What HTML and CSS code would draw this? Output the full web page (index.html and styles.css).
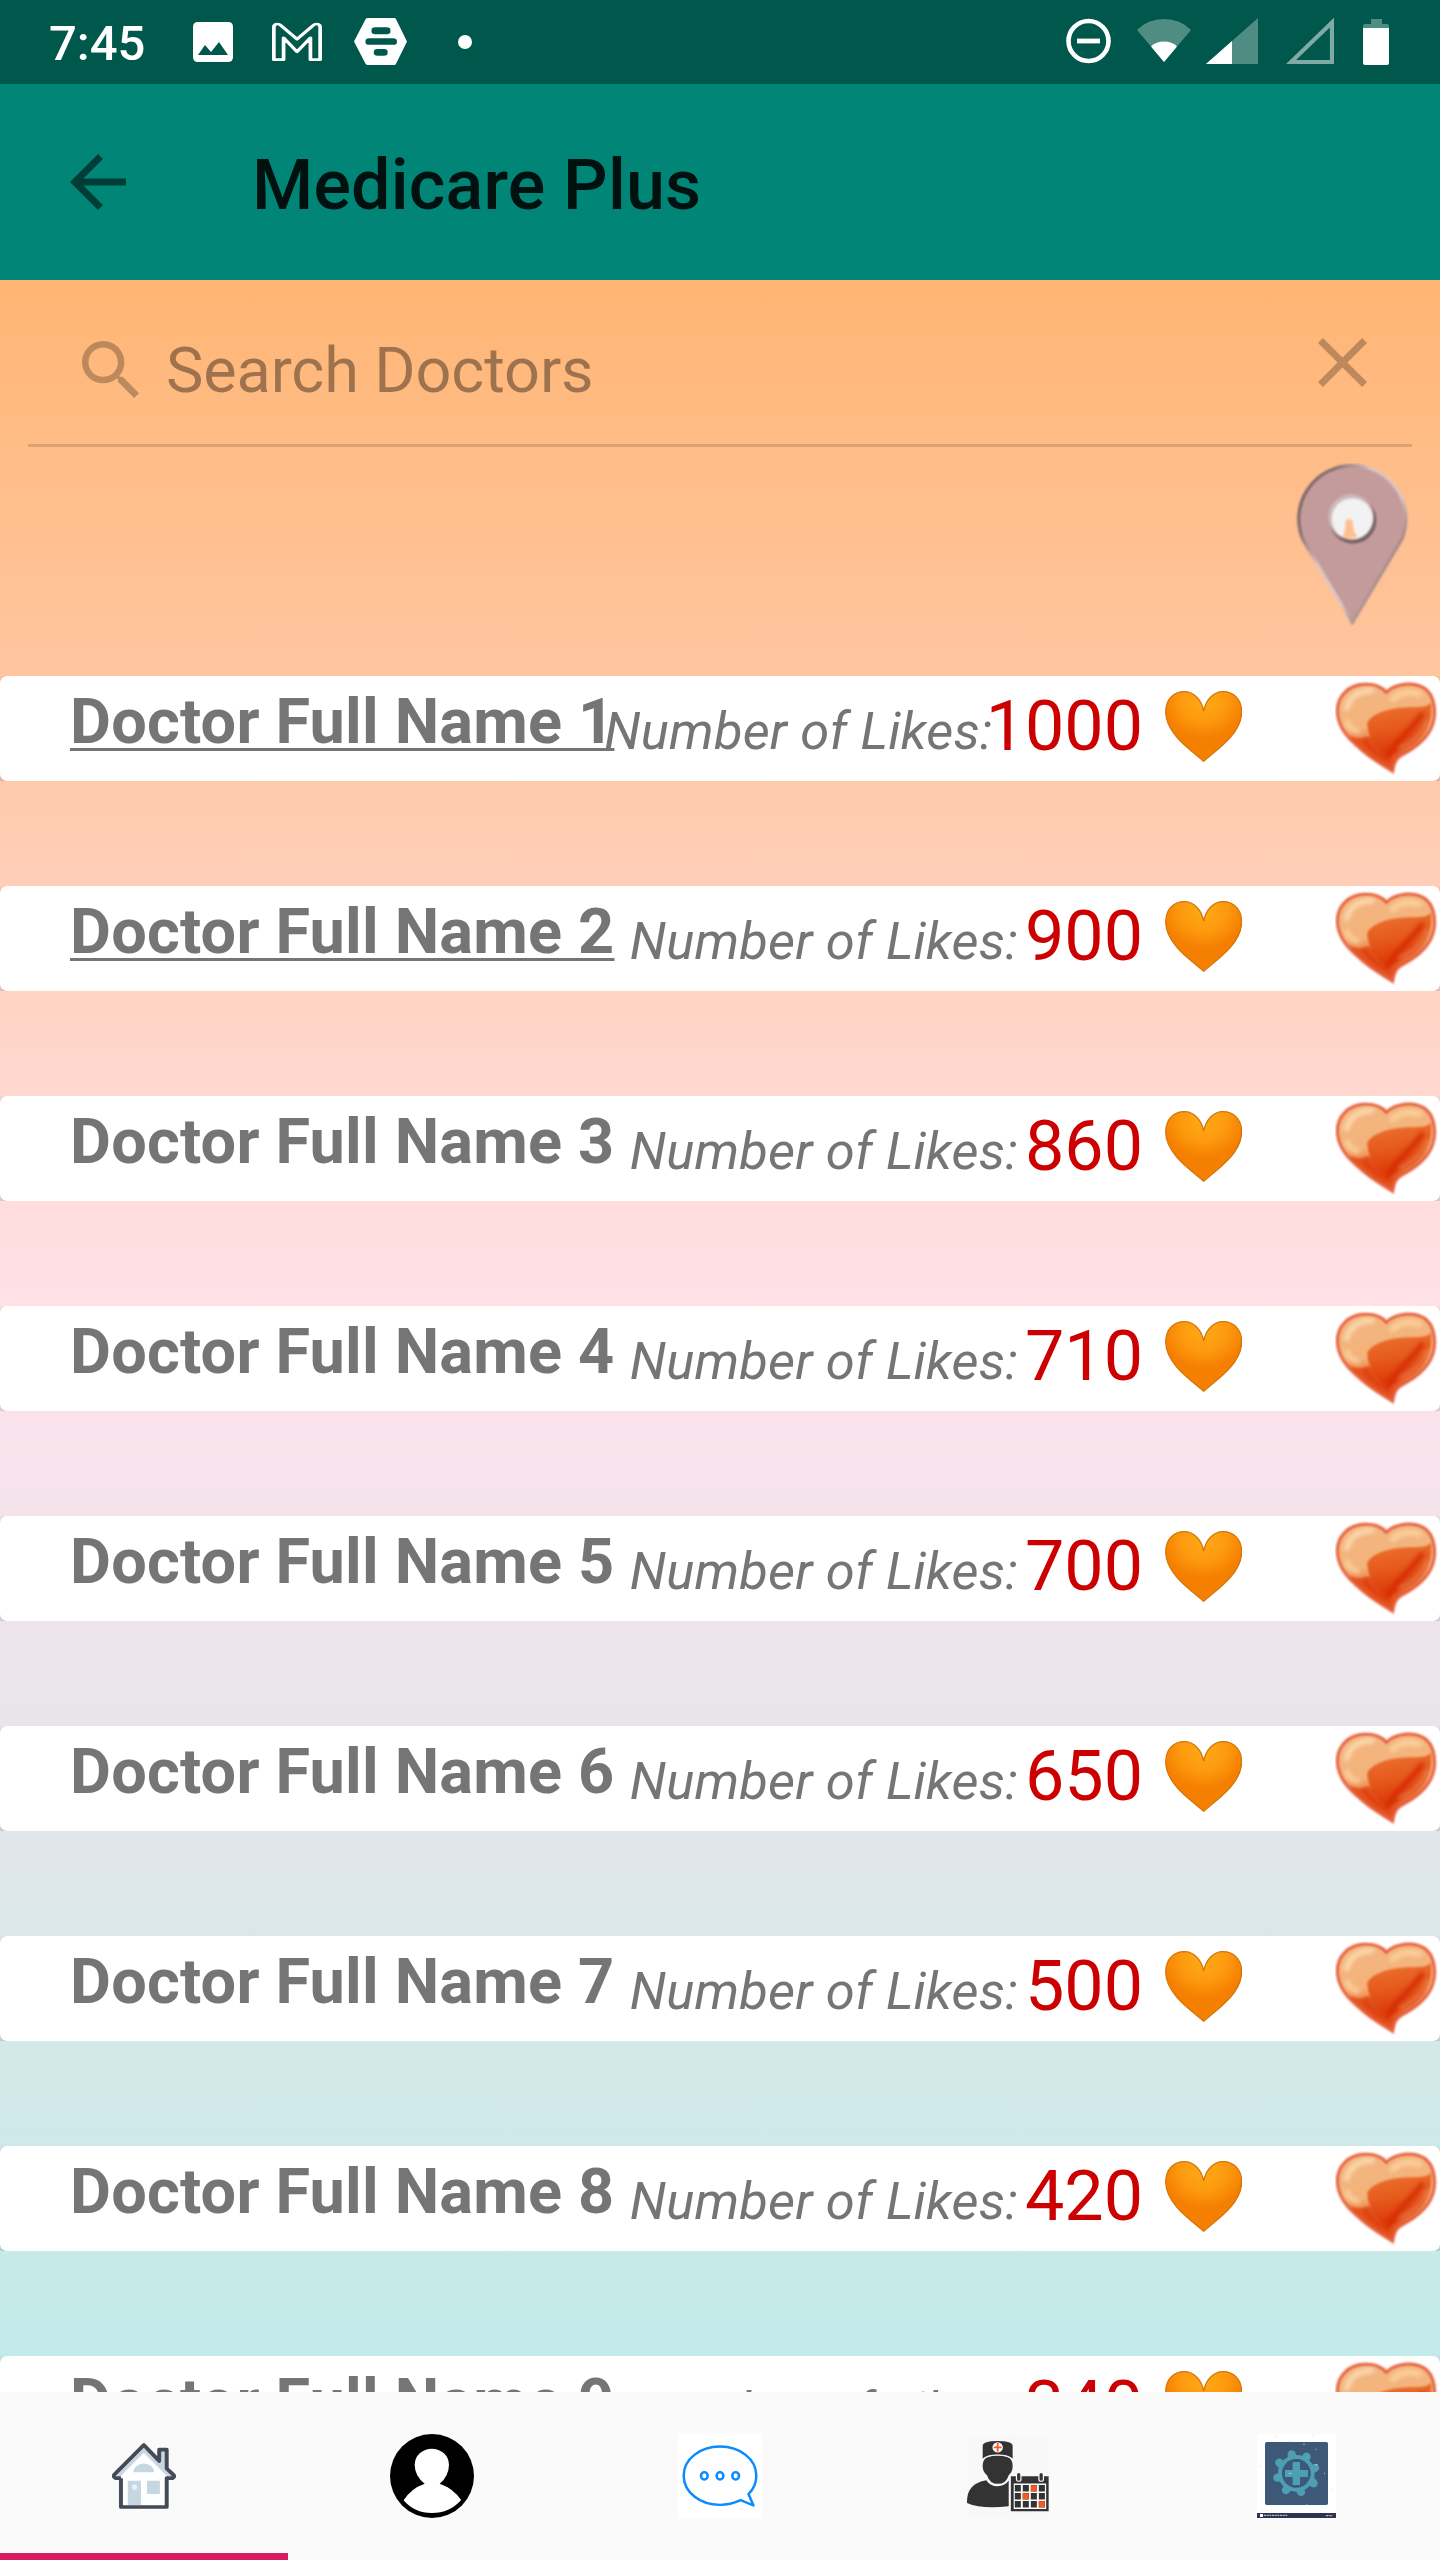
FILE: index.html
```html
<!DOCTYPE html>
<html lang="en">
<head>
<meta charset="utf-8">
<title>Medicare Plus</title>
<link rel="stylesheet" href="styles.css">
</head>
<body>
<svg class="sprite" aria-hidden="true">
  <defs>
    <radialGradient id="amber" cx=".5" cy=".12" r=".55">
      <stop offset="0" stop-color="#ffa916"/><stop offset=".55" stop-color="#fd9a0e"/><stop offset="1" stop-color="#f57f00"/>
    </radialGradient>
    <linearGradient id="peach" x1="0" y1="0" x2="0" y2="1">
      <stop offset="0" stop-color="#f4b581"/><stop offset=".5" stop-color="#f3b37a"/><stop offset=".7" stop-color="#ea7238"/><stop offset="1" stop-color="#e24d1a"/>
    </linearGradient>
    <linearGradient id="ember" x1="0" y1="0" x2=".2" y2="1">
      <stop offset="0" stop-color="#ec7532"/><stop offset=".5" stop-color="#e65a1d"/><stop offset="1" stop-color="#dc3304"/>
    </linearGradient>
    <linearGradient id="bevel" x1="0" y1="0" x2="1" y2=".8">
      <stop offset="0" stop-color="#6d5659"/><stop offset=".22" stop-color="#806a6d"/><stop offset=".42" stop-color="#dac6c6"/><stop offset=".68" stop-color="#dac6c6"/><stop offset=".85" stop-color="#947a7c"/>
    </linearGradient>
    <filter id="soft" x="-10%" y="-10%" width="120%" height="120%" color-interpolation-filters="sRGB"><feGaussianBlur stdDeviation="3"/></filter>
    <filter id="softer" x="-30%" y="-30%" width="160%" height="160%" color-interpolation-filters="sRGB"><feGaussianBlur stdDeviation="6"/></filter>
    <symbol id="like" viewBox="135 93 231 211" preserveAspectRatio="none">
      <path d="M251 302C212 268 137 220 137 155C137 118 160 95 193 95C222 95 245 120 251 153C257 120 280 95 309 95C342 95 365 118 365 155C365 220 290 268 251 302Z" fill="url(#amber)" stroke="#d07405" stroke-width="3.5"/>
    </symbol>
    <symbol id="gloss" viewBox="645 48 315 315">
      <g filter="url(#soft)">
        <path d="M818 334C795 318 752 298 712 258C668 222 653 190 652 154C651 108 686 74 734 73C766 72 788 83 799 97C818 76 858 68 888 74C924 82 943 112 944 156C944 208 912 248 858 278C830 292 822 304 818 334Z" fill="url(#peach)" stroke="#e6603e" stroke-width="9"/>
        <path d="M690 226C710 240 730 234 745 228C770 252 800 270 860 262C830 286 818 300 814 324C790 310 748 290 700 242Z" fill="#e4551f"/>
        <path d="M742 188C760 158 810 144 865 142C895 140 918 144 932 128C940 180 920 230 868 258C835 272 815 280 804 298C785 280 742 244 742 188Z" fill="url(#ember)"/>
      </g>
      <g filter="url(#softer)" fill="none" stroke-linecap="round">
        <path d="M924 182C908 224 878 246 840 264" stroke="#f09a6b" stroke-width="9" opacity=".75"/>
        <path d="M905 165C875 208 835 235 808 280" stroke="#d52b03" stroke-width="17" opacity=".9"/>
        <path d="M735 245C760 275 785 290 806 300" stroke="#dc3c0c" stroke-width="14"/>
        <path d="M680 145C690 108 718 92 755 92" stroke="#fad7ab" stroke-width="18"/>
        <path d="M682 185C686 202 698 212 712 212" stroke="#f9cd9c" stroke-width="16"/>
        <path d="M818 118C838 98 868 92 898 102" stroke="#fbd09a" stroke-width="18"/>
      </g>
    </symbol>
  </defs>
</svg>

<div class="screen">
  <header class="status">
    <span class="time">7:45</span>
    <svg class="st-image" viewBox="0 0 40 40"><path fill="#fff" fill-rule="evenodd" d="M5 0H35Q40 0 40 5V35Q40 40 35 40H5Q0 40 0 35V5Q0 0 5 0ZM5 33H35L26 20L18 30L12 23Z"/></svg>
    <svg class="st-mail" viewBox="593 64 108 118" preserveAspectRatio="none"><path fill="none" stroke="#fff" stroke-width="8" stroke-linejoin="round" d="M597 178V80Q597 70 605 70Q609 70 612 74L647 116L682 74Q685 70 689 70Q697 70 697 80V178H676V112L647 154L618 112V178Z"/></svg>
    <svg class="st-hex" viewBox="771 55 115 142" preserveAspectRatio="none"><path fill="#fff" d="M801 55H858Q861 55 862 58L886 126L862 194Q861 197 858 197H801Q798 197 796 193L771 126L796 59Q798 55 801 55Z"/><g fill="#00574b"><rect x="809" y="83" width="41" height="21" rx="8"/><rect x="796" y="116" width="68" height="20" rx="8"/><rect x="814" y="149" width="30" height="20" rx="8"/></g></svg>
    <i class="st-dot"></i>
    <svg class="st-dnd" viewBox="0 0 45 46"><circle cx="22.5" cy="23" r="20" fill="none" stroke="#fff" stroke-width="4.6"/><path d="M11 23H34" stroke="#fff" stroke-width="4.8"/></svg>
    <svg class="st-wifi" viewBox="0 0 54 43"><path d="M27 43L0 11Q11 0 27 0Q43 0 54 11Z" fill="#4f8c82"/><path d="M27 43L14 27.500Q19 22.500 27 22.500Q35 22.500 40 27.500Z" fill="#fff"/></svg>
    <svg class="st-cell" viewBox="0 0 52 46"><path d="M52 0V46H0Z" fill="#4f8c82"/><path d="M26 23V46H0Z" fill="#fff"/></svg>
    <svg class="st-empty" viewBox="0 0 48 46"><path d="M46 4.500V44H5Z" fill="none" stroke="#80aba5" stroke-width="4.2"/></svg>
    <svg class="st-battery" viewBox="0 0 26 46"><path d="M8 0H19V5H24Q26 5 26 7V11H0V7Q0 5 2 5H8Z" fill="#4f8c82"/><path d="M0 9H26V44Q26 46 24 46H2Q0 46 0 44Z" fill="#fff"/></svg>
  </header>

  <div class="appbar">
    <svg class="back" viewBox="0 0 24 24"><path d="M20 11H7.830l5.590-5.590L12 4l-8 8 8 8 1.410-1.410L7.830 13H20v-2z"/></svg>
    <h1>Medicare Plus</h1>
  </div>

  <main>
    <div class="search">
      <svg class="lens" viewBox="3 3 17.490 17.490"><path d="M15.500 14h-.790l-.280-.270A6.471 6.471 0 0 0 16 9.500 6.500 6.500 0 1 0 9.500 16c1.610 0 3.090-.590 4.230-1.570l.270.280v.790l5 4.990L20.490 19l-4.990-5zm-6 0C7.010 14 5 11.990 5 9.500S7.010 5 9.500 5 14 7.010 14 9.500 11.990 14 9.500 14z"/></svg>
      <span class="hint">Search Doctors</span>
      <svg class="clear" viewBox="5 5 14 14"><path d="M19 6.410L17.590 5 12 10.590 6.410 5 5 6.410 10.590 12 5 17.590 6.410 19 12 13.410 17.590 19 19 17.590 13.410 12z"/></svg>
    </div>

    <div class="locate">
      <svg class="pin" viewBox="1005 518 345 490">
        <g filter="url(#soft)">
          <path d="M1180 998L1032 750A161 161 0 1 1 1329 747Z" fill="#c39b9a" stroke="url(#bevel)" stroke-width="9"/>
          <circle cx="1182" cy="690" r="70" fill="#765f62"/>
          <circle cx="1176" cy="680" r="68" fill="#cdbbbb"/>
          <circle cx="1180" cy="686" r="62" fill="#f2f2f2"/>
          <path d="M1150 742Q1160 725 1159 697Q1170 672 1182 697Q1181 725 1196 740Q1174 749 1150 742Z" fill="#ffc08f"/>
        </g>
      </svg>
    </div>

    <ul class="doctors">
      <li><div class="card first"><a class="name link">Doctor Full Name 1</a><em>Number of Likes:</em><b>1000</b><svg class="like"><use href="#like"/></svg><svg class="gloss"><use href="#gloss"/></svg></div></li>
      <li><div class="card"><a class="name link">Doctor Full Name 2</a><em>Number of Likes:</em><b>900</b><svg class="like"><use href="#like"/></svg><svg class="gloss"><use href="#gloss"/></svg></div></li>
      <li><div class="card"><span class="name">Doctor Full Name 3</span><em>Number of Likes:</em><b>860</b><svg class="like"><use href="#like"/></svg><svg class="gloss"><use href="#gloss"/></svg></div></li>
      <li><div class="card"><span class="name">Doctor Full Name 4</span><em>Number of Likes:</em><b>710</b><svg class="like"><use href="#like"/></svg><svg class="gloss"><use href="#gloss"/></svg></div></li>
      <li><div class="card"><span class="name">Doctor Full Name 5</span><em>Number of Likes:</em><b>700</b><svg class="like"><use href="#like"/></svg><svg class="gloss"><use href="#gloss"/></svg></div></li>
      <li><div class="card"><span class="name">Doctor Full Name 6</span><em>Number of Likes:</em><b>650</b><svg class="like"><use href="#like"/></svg><svg class="gloss"><use href="#gloss"/></svg></div></li>
      <li><div class="card"><span class="name">Doctor Full Name 7</span><em>Number of Likes:</em><b>500</b><svg class="like"><use href="#like"/></svg><svg class="gloss"><use href="#gloss"/></svg></div></li>
      <li><div class="card"><span class="name">Doctor Full Name 8</span><em>Number of Likes:</em><b>420</b><svg class="like"><use href="#like"/></svg><svg class="gloss"><use href="#gloss"/></svg></div></li>
      <li><div class="card"><span class="name">Doctor Full Name 9</span><em>Number of Likes:</em><b>340</b><svg class="like"><use href="#like"/></svg><svg class="gloss"><use href="#gloss"/></svg></div></li>
    </ul>
  </main>

  <nav class="tabs">
    <a class="tab active">
      <svg width="64" height="66" viewBox="314 340 179 197" preserveAspectRatio="none">
        <path d="M339 440V531H467V440L403 372Z" fill="#fff"/>
        <path d="M403 350L322 438L336 441L403 369L470 441L486 438L467 417V360H447V396Z" fill="#c7d7e2"/>
        <path d="M374 427A29 26 0 0 1 432 427Z" fill="#c7d7e2"/>
        <path d="M358 453H395V526H358ZM412 453H448V492H412Z" fill="#c7d7e2"/>
        <ellipse cx="377" cy="472" rx="7" ry="8" fill="#e7f5fb"/>
        <path d="M339 445V531H467V445H484Q490 440 486 435L467 416V360H446V394L403 346L320 435Q317 442 325 445H339" fill="none" stroke="#444b56" stroke-width="11" stroke-linejoin="round"/>
      </svg>
    </a>
    <a class="tab">
      <svg width="84" height="84" viewBox="1092 312 235 252" preserveAspectRatio="none">
        <ellipse cx="1209.500" cy="438" rx="117.500" ry="126" fill="#000"/>
        <path d="M1130 511Q1151 475 1189 461Q1161 437 1161 404A48 48 0 0 1 1257 404Q1257 437 1231 461Q1269 475 1291 510Q1259 549 1209 549Q1160 549 1130 511Z" fill="#fff"/>
      </svg>
    </a>
    <a class="tab">
      <svg width="84" height="84" viewBox="330 315 236 249" preserveAspectRatio="none">
        <rect x="330" y="315" width="236" height="249" fill="#fff"/>
        <g fill="none" stroke="#0a8bff" stroke-width="7">
          <path d="M528 493C541 480 550 463 550 438C550 389 504 352 448 352C392 352 346 389 346 438C346 488 392 525 448 525C470 525 489 519 506 511L542 527Z" stroke-linejoin="round"/>
          <ellipse cx="404" cy="439" rx="9.500" ry="11"/><ellipse cx="448" cy="439" rx="9.500" ry="11"/><ellipse cx="492" cy="439" rx="9.500" ry="11"/>
        </g>
      </svg>
    </a>
    <a class="tab">
      <svg width="82" height="83" viewBox="1140 315 230 248" preserveAspectRatio="none">
        <defs><pattern id="hatch" width="12" height="12" patternUnits="userSpaceOnUse"><path d="M-2 14L14 -2" stroke="#ebebeb" stroke-width="1.500"/></pattern></defs>
        <rect x="1140" y="315" width="230" height="248" fill="url(#hatch)"/>
        <g fill="#333">
          <path d="M1184 386V348Q1184 333 1226 333Q1268 333 1268 348V386Q1255 374 1226 374Q1197 374 1184 386Z"/>
          <path d="M1184 408Q1184 392 1193 384Q1205 376 1226 376Q1247 376 1259 384Q1268 392 1268 408Q1268 425 1257 435Q1250 461 1226 461Q1204 461 1196 435Q1184 425 1184 408Z"/>
          <path d="M1140 518Q1138 460 1194 450Q1205 468 1226 468Q1246 468 1257 451V528Q1180 537 1140 518Z"/>
          <path d="M1263 438H1369V543H1263Z"/>
        </g>
        <path d="M1184 388Q1197 375 1226 375Q1255 375 1268 388" fill="none" stroke="#fafafa" stroke-width="3"/>
        <ellipse cx="1226" cy="352" rx="14.500" ry="15.500" fill="#fff"/>
        <path d="M1226 339V365M1215 352H1237" stroke="#f45a22" stroke-width="5"/>
        <path d="M1271 460H1362V536H1271Z" fill="#fff"/>
        <path d="M1285 433V447M1348 433V447" stroke="#fafafa" stroke-width="16" stroke-linecap="round"/>
        <path d="M1285 433V447M1348 433V447" stroke="#333" stroke-width="9" stroke-linecap="round"/>
        <path d="M1274 474H1360M1274 498H1360M1274 522H1360" stroke="#333" stroke-width="19" stroke-dasharray="17 5.500"/>
        <path d="M1319 465h17v18h-17zM1296 489h17v18h-17zM1341 513h17v18h-17z" fill="#f45a22"/>
      </svg>
    </a>
    <a class="tab">
      <svg width="79" height="84" viewBox="471 312 237 252">
        <path d="M471 312H708V549H471Z" fill="#fff"/>
        <rect x="495" y="336" width="189" height="189" rx="5" fill="#3e5878"/>
        <circle cx="589" cy="430" r="49" fill="none" stroke="#4d9fb4" stroke-width="12"/>
        <g stroke="#4d9fb4" stroke-width="25" stroke-linecap="round"><path d="M578 386L575 373M613 390L620 380M633 419L645 414M630 448L641 460M598 474L603 486M566 470L558 480M546 439L532 443M551 409L538 398"/></g>
        <circle cx="589" cy="430" r="43" fill="#3e5878"/>
        <path d="M578 396h22v24h24v21h-24v24h-22v-24h-23v-21h23z" fill="#4d9fb4"/>
        <path d="M471 549H708V564H471Z" fill="#32334e"/>
        <path d="M480 552h9v9h-9z" fill="#fff"/>
        <path d="M492 556H563M678 557H697" stroke="#b8b8c5" stroke-width="4" stroke-dasharray="6 2"/>
        <path d="M567 335h3M610 343h4M619 382h3M645 404h8M566 430h9M646 358h3M672 430h3M619 523h3" stroke="#a9cbd6" stroke-width="3"/>
        <path d="M479 411l6-6M522 322l6-6M485 543l5-5M693 483l5-5M637 320l6-6" stroke="#ddd" stroke-width="2"/>
      </svg>
    </a>
  </nav>
</div>
</body>
</html>
```
FILE: styles.css
```css
* { box-sizing: border-box; }
body { margin: 0; font-family: Roboto, "Noto Sans", sans-serif; }
svg { display: block; flex: none; }
.sprite { position: absolute; width: 0; height: 0; }

.screen { width: 1440px; height: 2560px; display: flex; flex-direction: column; overflow: hidden; }

.status { flex: none; height: 84px; background: #00574b; display: flex; align-items: flex-start; padding-left: 49px; }
.time { width: 144px; font-size: 49px; font-weight: 500; line-height: 88px; color: #fff; }
.st-image { width: 40px; height: 40px; margin-top: 22px; }
.st-mail { width: 50px; height: 39px; margin: 22px 0 0 39px; }
.st-hex { width: 53px; height: 47px; margin: 18px 0 0 32px; }
.st-dot { width: 14px; height: 14px; border-radius: 50%; background: #fff; margin: 35px 0 0 51px; }
.st-dnd { width: 45px; height: 46px; margin: 18px 26px 0 auto; }
.st-wifi { width: 54px; height: 43px; margin: 19px 15px 0 0; }
.st-cell { width: 52px; height: 46px; margin: 18px 28px 0 0; }
.st-empty { width: 48px; height: 46px; margin: 18px 29px 0 0; }
.st-battery { width: 26px; height: 46px; margin: 19px 51px 0 0; }

.appbar { flex: none; height: 196px; background: #008577; display: flex; padding: 0 56px; }
.back { width: 84px; height: 84px; margin: 56px 112px 0 0; fill: rgba(0, 0, 0, .54); }
h1 { margin: 0; font-size: 70px; font-weight: 500; line-height: 202px; letter-spacing: .2px; color: rgba(0, 0, 0, .87); white-space: nowrap; }

main { flex: 1; min-height: 0; overflow: hidden; background: linear-gradient(#ffb573, #ffe2ec 50%, #bfebe8); }
.search { height: 167px; margin: 0 28px; padding: 0 45px 0 54px; display: flex; align-items: flex-start; border-bottom: 3px solid rgba(0, 0, 0, .14); }
.lens { width: 57px; height: 57px; margin: 61px 27px 0 0; fill: rgba(0, 0, 0, .26); }
.hint { font-size: 63px; line-height: 181px; height: 164px; letter-spacing: -.12px; color: rgba(0, 0, 0, .38); }
.clear { width: 49px; height: 49px; margin: 58px 0 0 auto; fill: rgba(0, 0, 0, .26); }
.locate { height: 229px; display: flex; justify-content: flex-end; padding: 16px 31px 0 0; }
.pin { width: 115px; height: 163px; }

.doctors { list-style: none; margin: 0; padding: 0; display: grid; gap: 105px; }
.doctors li { height: 105px; overflow: hidden; }
.card { height: 105px; border-radius: 7px; background: #fff; box-shadow: 0 3px 7px rgba(0, 0, 0, .25); display: flex; align-items: flex-start; padding-left: 70px; color: #757575; white-space: nowrap; }
.name { margin-right: auto; font-size: 63px; font-weight: 700; line-height: 91px; letter-spacing: .2px; }
.link { text-decoration: underline 3px; text-underline-offset: 5px; text-decoration-skip-ink: none; }
.card em { font-size: 52.500px; line-height: 110px; margin-right: 7px; letter-spacing: .18px; }
.first em { margin: 0 -7px 0 -20px; }
.card b { font-size: 70px; font-weight: 400; line-height: 100px; color: #c00; }
.like { width: 77px; height: 71px; margin: 15px 93px 0 22px; }
.gloss { width: 105px; height: 105px; }

.tabs { flex: none; height: 168px; background: #fafafa; display: grid; grid-template-columns: repeat(5, 1fr); }
.tab { display: flex; align-items: center; justify-content: center; }
.active { padding-top: 7px; border-bottom: 7px solid #d81b60; }
```
